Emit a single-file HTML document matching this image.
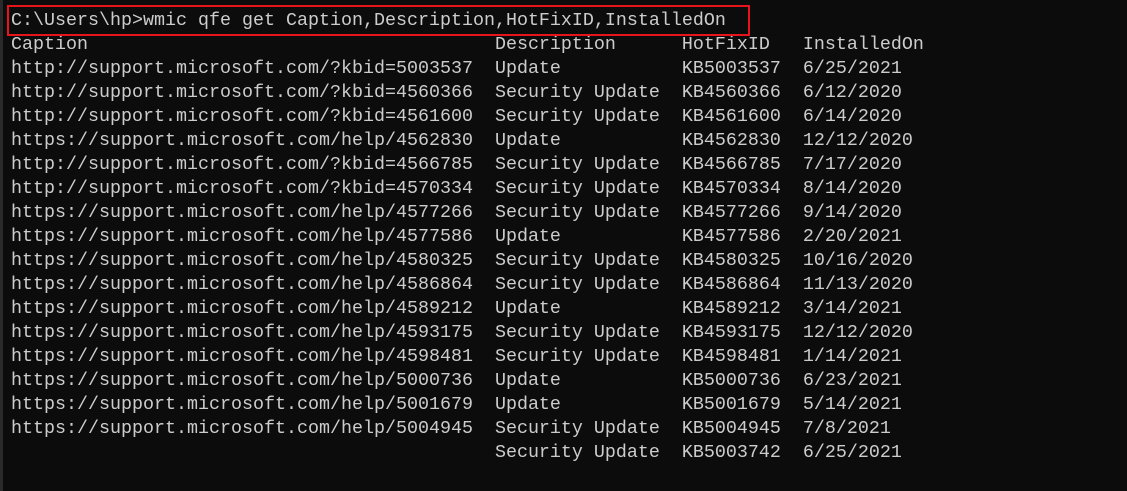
<!DOCTYPE html>
<html><head><style>
html,body{margin:0;padding:0;width:1127px;height:491px;background:#0c0c0c;overflow:hidden}
.l{position:absolute;left:0;top:0;width:3px;height:491px;background:#2a2a2a}
pre{position:absolute;left:11px;top:9px;margin:0;font-family:"Liberation Mono",monospace;font-size:18.33px;line-height:24px;color:#cccccc;letter-spacing:0}
.box{position:absolute;left:7px;top:5px;width:739px;height:27px;border:2px solid #e8141c}
</style></head><body>
<div class="l"></div>
<pre>C:\Users\hp>wmic qfe get Caption,Description,HotFixID,InstalledOn
Caption                                     Description      HotFixID   InstalledOn
http://support.microsoft.com/?kbid=5003537  Update           KB5003537  6/25/2021
http://support.microsoft.com/?kbid=4560366  Security Update  KB4560366  6/12/2020
http://support.microsoft.com/?kbid=4561600  Security Update  KB4561600  6/14/2020
https://support.microsoft.com/help/4562830  Update           KB4562830  12/12/2020
http://support.microsoft.com/?kbid=4566785  Security Update  KB4566785  7/17/2020
http://support.microsoft.com/?kbid=4570334  Security Update  KB4570334  8/14/2020
https://support.microsoft.com/help/4577266  Security Update  KB4577266  9/14/2020
https://support.microsoft.com/help/4577586  Update           KB4577586  2/20/2021
https://support.microsoft.com/help/4580325  Security Update  KB4580325  10/16/2020
https://support.microsoft.com/help/4586864  Security Update  KB4586864  11/13/2020
https://support.microsoft.com/help/4589212  Update           KB4589212  3/14/2021
https://support.microsoft.com/help/4593175  Security Update  KB4593175  12/12/2020
https://support.microsoft.com/help/4598481  Security Update  KB4598481  1/14/2021
https://support.microsoft.com/help/5000736  Update           KB5000736  6/23/2021
https://support.microsoft.com/help/5001679  Update           KB5001679  5/14/2021
https://support.microsoft.com/help/5004945  Security Update  KB5004945  7/8/2021
                                            Security Update  KB5003742  6/25/2021</pre>
<div class="box"></div>
</body></html>
